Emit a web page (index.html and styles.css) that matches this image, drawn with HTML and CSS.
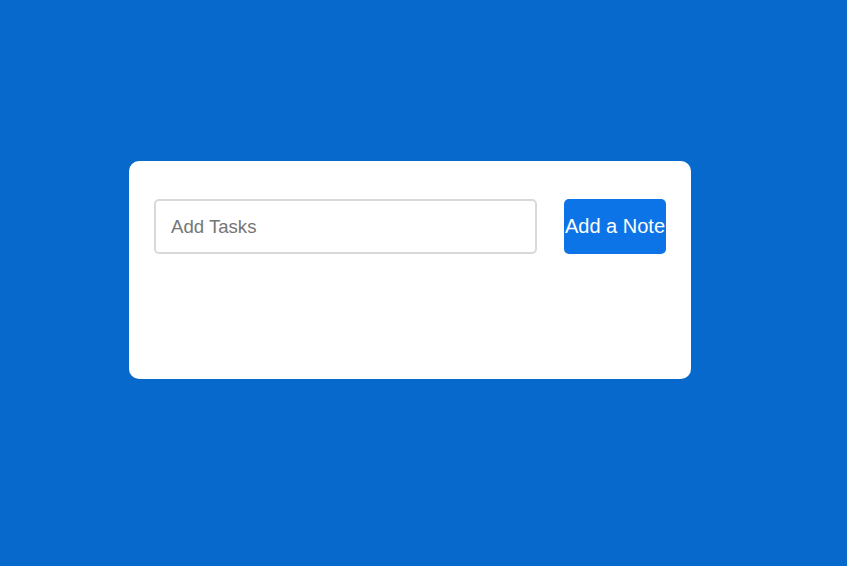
FILE: index.html
```html
<!DOCTYPE html>
<html lang="en">
<head>
<meta charset="utf-8">
<title>To Do</title>
<link rel="stylesheet" href="styles.css">
</head>
<body>
  <main class="page">
    <section class="card">
      <div class="row">
        <input class="task-input" type="text" placeholder="Add Tasks">
        <button class="add-btn" type="button">Add a Note</button>
      </div>
      <ul class="list"></ul>
    </section>
  </main>
</body>
</html>
```

FILE: styles.css
```css
html, body {
  margin: 0;
  padding: 0;
  height: 100%;
}
body {
  background: #0669cb;
  font-family: "Liberation Sans", Arial, sans-serif;
}
.page {
  padding: 161px 0 0 129px;
}
.card {
  box-sizing: border-box;
  width: 562px;
  height: 218px;
  background: #ffffff;
  border-radius: 10px;
  padding: 38px 25px 0 25px;
}
.row {
  display: flex;
  align-items: stretch;
  gap: 27px;
}
.task-input {
  box-sizing: border-box;
  width: 383px;
  height: 55px;
  border: 2px solid #d9d9d9;
  border-radius: 5px;
  padding: 0 15px;
  font-family: "Liberation Sans", Arial, sans-serif;
  font-size: 18.6px;
  color: #333;
  outline: none;
}
.task-input::placeholder {
  color: #757575;
}
.add-btn {
  box-sizing: border-box;
  width: 102px;
  height: 55px;
  border: none;
  border-radius: 5px;
  background: #0d74e7;
  color: #ffffff;
  font-family: "Liberation Sans", Arial, sans-serif;
  font-size: 20px;
  padding: 0;
  white-space: nowrap;
  display: flex;
  align-items: center;
  justify-content: center;
  overflow: visible;
}
.list {
  margin: 0;
  padding: 0;
  list-style: none;
}
```
